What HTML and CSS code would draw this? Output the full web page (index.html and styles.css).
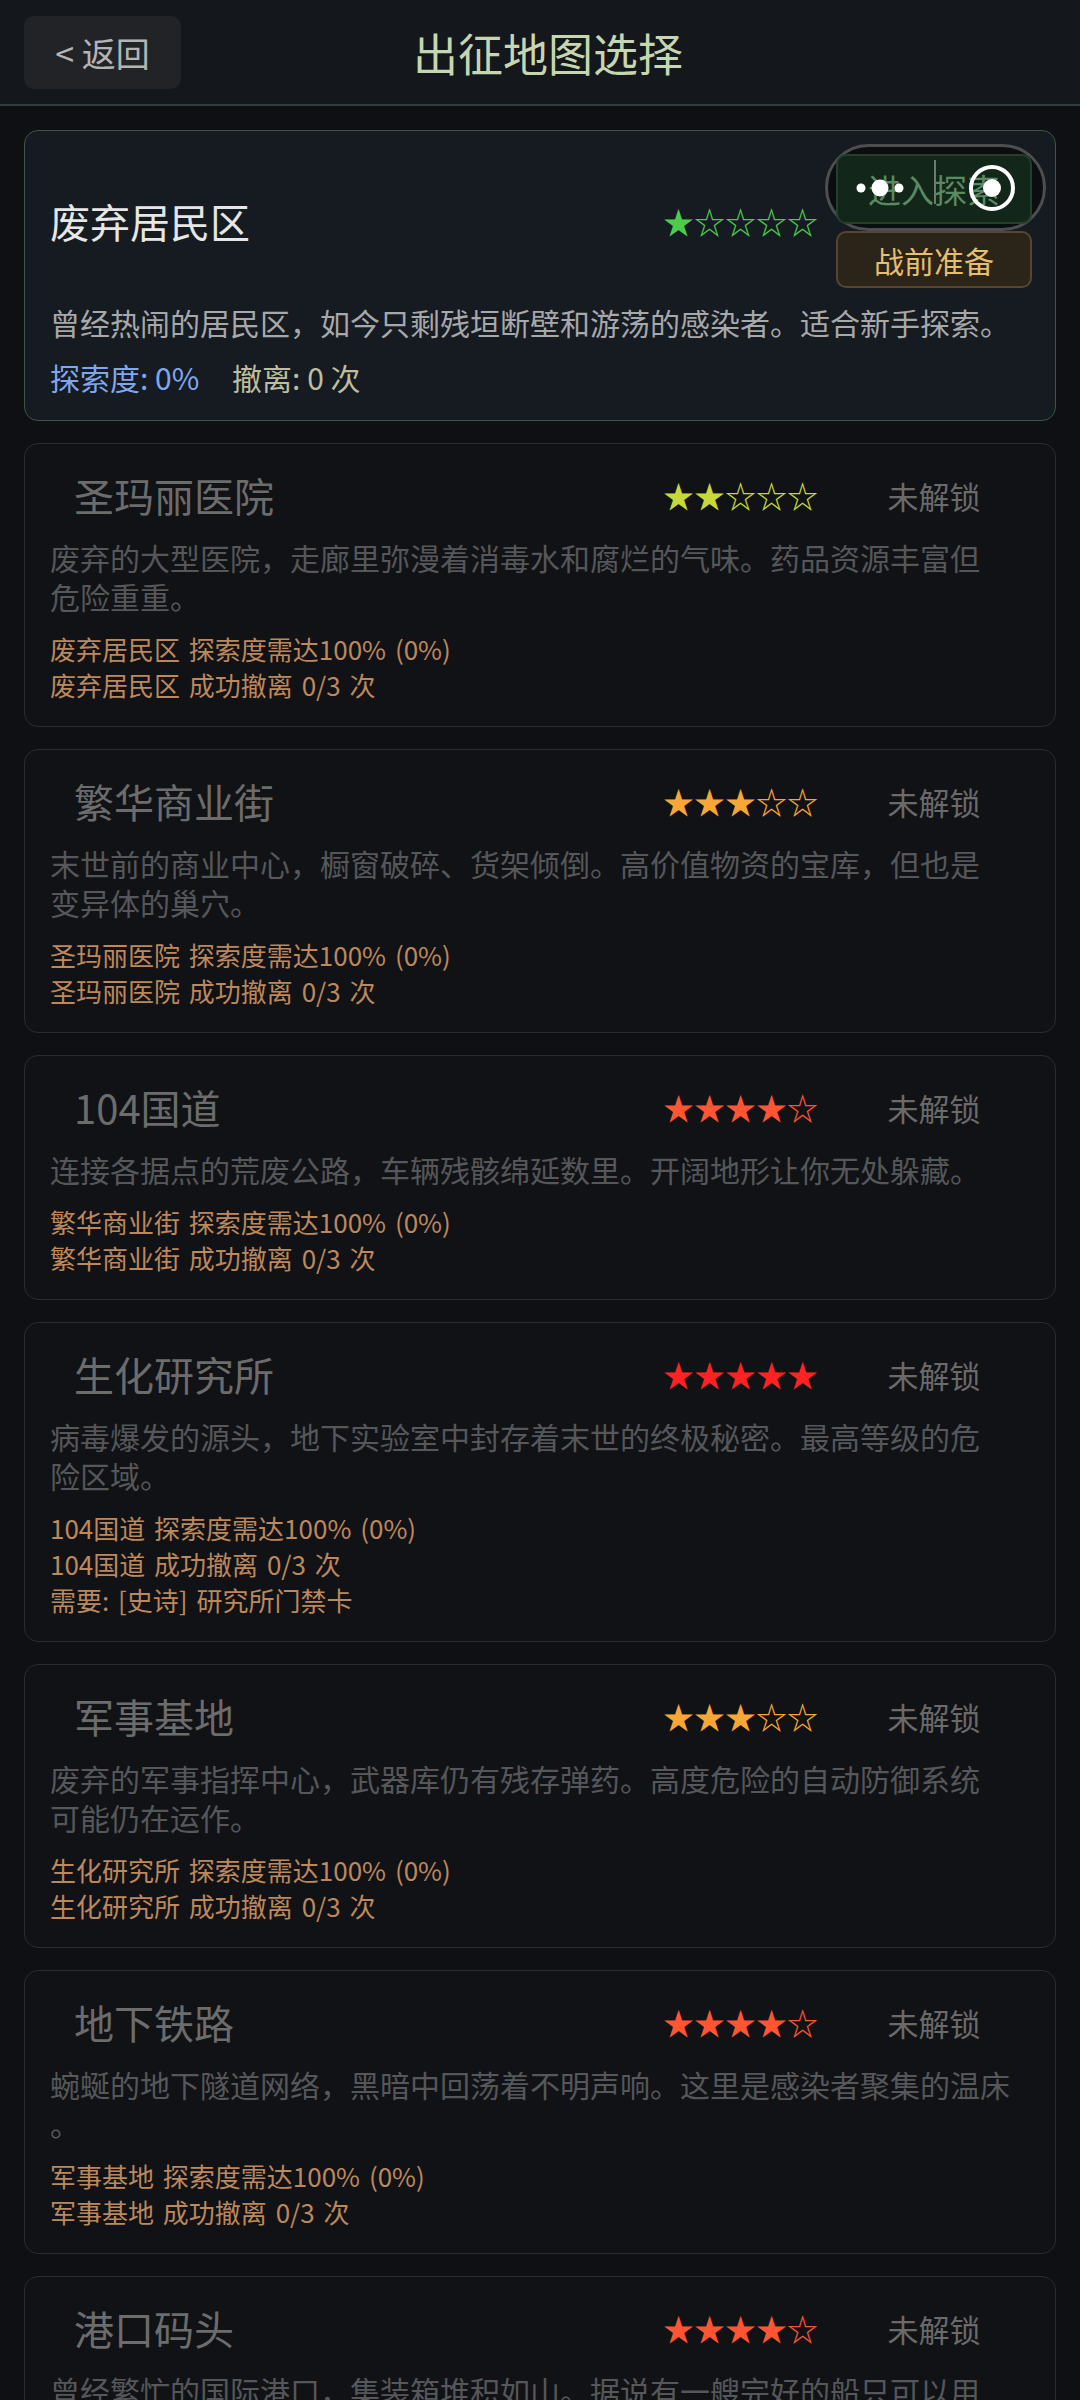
FILE: index.html
```html
<!DOCTYPE html>
<html lang="zh-CN">
<head>
    <meta charset="UTF-8">
    <meta name="viewport" content="width=device-width, initial-scale=1.0">
    <title>出征地图选择</title>
    <link rel="stylesheet" href="styles.css">
</head>
<body>

<div class="header">
    <button class="back-btn">&lt; 返回</button>
    <h1 class="title">出征地图选择</h1>
    <div></div>
</div>

<div class="map-list">

    <div class="map-card active">
        <div class="card-top">
            <div class="map-name">废弃居民区</div>
            <div class="stars s1">★☆☆☆☆</div>
            <div class="actions">
                <div class="enter-wrap">
                    <svg class="touch-pill" width="221" height="87" viewBox="0 0 221 87">
                        <rect x="1.5" y="1.5" width="218" height="84" rx="42" fill="#0b0d0f" stroke="#4c4e50" stroke-width="3"/>
                    </svg>
                    <button class="enter-btn">进入探索</button>
                    <svg class="touch-dots" width="221" height="87" viewBox="0 0 221 87">
                        <line x1="110" y1="16" x2="110" y2="60" stroke="#6c7a70" stroke-width="2"/>
                        <circle cx="36" cy="44" r="4.5" fill="#fff"/>
                        <circle cx="55" cy="44" r="8.5" fill="#fff"/>
                        <circle cx="74" cy="44" r="4.5" fill="#fff"/>
                        <circle cx="167" cy="44" r="21" fill="none" stroke="#fff" stroke-width="4"/>
                        <circle cx="167" cy="44" r="9" fill="#fff"/>
                    </svg>
                </div>
                <button class="prep-btn">战前准备</button>
            </div>
        </div>
        <div class="map-desc">曾经热闹的居民区，如今只剩残垣断壁和游荡的感染者。适合新手探索。</div>
        <div class="map-stats">
            <span class="explore">探索度: 0%</span>
            <span class="escape">撤离: 0 次</span>
        </div>
    </div>

    <div class="map-card locked">
        <div class="card-top">
            <div class="map-name">圣玛丽医院</div>
            <div class="stars s2">★★☆☆☆</div>
            <div class="lock-label">未解锁</div>
        </div>
        <div class="map-desc">废弃的大型医院，走廊里弥漫着消毒水和腐烂的气味。药品资源丰富但<br>危险重重。</div>
        <div class="map-req">
            <div>废弃居民区 探索度需达100% (0%)</div>
            <div>废弃居民区 成功撤离 0/3 次</div>
        </div>
    </div>

    <div class="map-card locked">
        <div class="card-top">
            <div class="map-name">繁华商业街</div>
            <div class="stars s3">★★★☆☆</div>
            <div class="lock-label">未解锁</div>
        </div>
        <div class="map-desc">末世前的商业中心，橱窗破碎、货架倾倒。高价值物资的宝库，但也是<br>变异体的巢穴。</div>
        <div class="map-req">
            <div>圣玛丽医院 探索度需达100% (0%)</div>
            <div>圣玛丽医院 成功撤离 0/3 次</div>
        </div>
    </div>

    <div class="map-card locked">
        <div class="card-top">
            <div class="map-name">104国道</div>
            <div class="stars s4">★★★★☆</div>
            <div class="lock-label">未解锁</div>
        </div>
        <div class="map-desc">连接各据点的荒废公路，车辆残骸绵延数里。开阔地形让你无处躲藏。</div>
        <div class="map-req">
            <div>繁华商业街 探索度需达100% (0%)</div>
            <div>繁华商业街 成功撤离 0/3 次</div>
        </div>
    </div>

    <div class="map-card locked">
        <div class="card-top">
            <div class="map-name">生化研究所</div>
            <div class="stars s5">★★★★★</div>
            <div class="lock-label">未解锁</div>
        </div>
        <div class="map-desc">病毒爆发的源头，地下实验室中封存着末世的终极秘密。最高等级的危<br>险区域。</div>
        <div class="map-req">
            <div>104国道 探索度需达100% (0%)</div>
            <div>104国道 成功撤离 0/3 次</div>
            <div>需要: [史诗] 研究所门禁卡</div>
        </div>
    </div>

    <div class="map-card locked">
        <div class="card-top">
            <div class="map-name">军事基地</div>
            <div class="stars s3">★★★☆☆</div>
            <div class="lock-label">未解锁</div>
        </div>
        <div class="map-desc">废弃的军事指挥中心，武器库仍有残存弹药。高度危险的自动防御系统<br>可能仍在运作。</div>
        <div class="map-req">
            <div>生化研究所 探索度需达100% (0%)</div>
            <div>生化研究所 成功撤离 0/3 次</div>
        </div>
    </div>

    <div class="map-card locked">
        <div class="card-top">
            <div class="map-name">地下铁路</div>
            <div class="stars s4">★★★★☆</div>
            <div class="lock-label">未解锁</div>
        </div>
        <div class="map-desc">蜿蜒的地下隧道网络，黑暗中回荡着不明声响。这里是感染者聚集的温床<br>。</div>
        <div class="map-req">
            <div>军事基地 探索度需达100% (0%)</div>
            <div>军事基地 成功撤离 0/3 次</div>
        </div>
    </div>

    <div class="map-card locked">
        <div class="card-top">
            <div class="map-name">港口码头</div>
            <div class="stars s4">★★★★☆</div>
            <div class="lock-label">未解锁</div>
        </div>
        <div class="map-desc">曾经繁忙的国际港口，集装箱堆积如山。据说有一艘完好的船只可以用<br>来逃离这座城市。</div>
        <div class="map-req">
            <div>地下铁路 探索度需达100% (0%)</div>
            <div>地下铁路 成功撤离 0/3 次</div>
        </div>
    </div>

</div>

</body>
</html>
```

FILE: styles.css
```css
body {
    font-family: "Noto Sans CJK SC", sans-serif;
    background-color: #0e1014;
    margin: 0;
}
.header {
    display: grid;
    grid-template-columns: 1fr auto 1fr;
    align-items: center;
    height: 104px;
    padding: 0 24px;
    background-color: #14171b;
    border-bottom: 2px solid #363b40;
}
.back-btn {
    justify-self: start;
    width: 157px;
    height: 73px;
    margin-top: 1px;
    padding: 0;
    background-color: #222327;
    color: #b4b4b4;
    border: none;
    border-radius: 10px;
    font-family: inherit;
    font-size: 34px;
}
.title {
    margin: 0 0 0 16px;
    font-size: 45px;
    font-weight: normal;
    color: #c6d6b0;
}
.map-list {
    display: flex;
    flex-direction: column;
    gap: 22px;
    padding: 24px;
}
.map-card {
    padding: 23px 23px 23px 25px;
    border: 1px solid #2a2c30;
    border-radius: 14px;
    background-color: #111215;
}
.map-card.active {
    background-color: #161a21;
    border-color: #3a5842;
}
.card-top {
    display: flex;
    align-items: center;
    margin-bottom: 15px;
}
.map-name {
    flex: 1;
    font-size: 40px;
    line-height: 56px;
    color: #e6e6e6;
}
.locked .map-name {
    padding-left: 24px;
    color: #6c6c6c;
}
.stars {
    font-size: 31px;
    line-height: 40px;
    margin-right: 18px;
}
.s1 { color: #4ccc4a; }
.s2 { color: #c6d83a; }
.s3 { color: #f8a636; }
.s4 { color: #ff5533; }
.s5 { color: #ff2222; }
.lock-label {
    width: 196px;
    text-align: center;
    font-size: 31px;
    color: #6a6a6a;
}
.actions {
    display: flex;
    flex-direction: column;
    gap: 7px;
    width: 196px;
}
.enter-wrap {
    position: relative;
}
.touch-pill,
.touch-dots {
    position: absolute;
    left: -11px;
    top: -10px;
}
.enter-btn,
.prep-btn {
    width: 196px;
    padding: 0;
    border-radius: 10px;
    font-family: inherit;
}
.enter-btn {
    position: relative;
    display: block;
    height: 70px;
    background-color: #13261a;
    border: 2px solid #22412b;
    color: #5a8a62;
    font-size: 33px;
}
.prep-btn {
    height: 57px;
    background-color: #2a2419;
    border: 2px solid #564630;
    color: #e6be6e;
    font-size: 30px;
}
.map-desc {
    font-size: 30px;
    line-height: 39px;
    color: #55575a;
}
.active .map-desc {
    color: #a6a8aa;
}
.map-stats {
    margin-top: 15px;
    font-size: 30px;
    line-height: 40px;
}
.map-stats .explore {
    color: #80a6ee;
    margin-right: 26px;
}
.map-stats .escape {
    color: #bebe9e;
}
.map-req {
    margin-top: 15px;
    font-size: 26px;
    line-height: 36px;
    color: #bc885c;
    word-spacing: 3px;
}
```
